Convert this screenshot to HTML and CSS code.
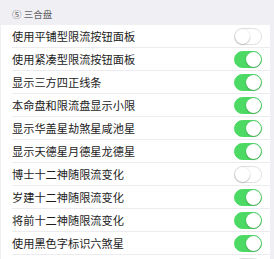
FILE: index.html
```html
<!DOCTYPE html>
<html>
<head>
<meta charset="utf-8">
<link rel="stylesheet" href="styles.css">
</head>
<body>
<div class="page">
  <div class="section-header">⑤ 三合盘</div>
  <div class="list">
    <div class="row"><span class="label">使用平铺型限流按钮面板</span><span class="switch"></span></div>
    <div class="row"><span class="label">使用紧凑型限流按钮面板</span><span class="switch on"></span></div>
    <div class="row"><span class="label">显示三方四正线条</span><span class="switch on"></span></div>
    <div class="row"><span class="label">本命盘和限流盘显示小限</span><span class="switch on"></span></div>
    <div class="row"><span class="label">显示华盖星劫煞星咸池星</span><span class="switch on"></span></div>
    <div class="row"><span class="label">显示天德星月德星龙德星</span><span class="switch on"></span></div>
    <div class="row"><span class="label">博士十二神随限流变化</span><span class="switch"></span></div>
    <div class="row"><span class="label">岁建十二神随限流变化</span><span class="switch on"></span></div>
    <div class="row"><span class="label">将前十二神随限流变化</span><span class="switch on"></span></div>
    <div class="row"><span class="label">使用黑色字标识六煞星</span><span class="switch on"></span></div>
    <div class="row"><span class="label"></span><span class="switch"></span></div>
  </div>
</div>
</body>
</html>
```
FILE: styles.css
```css
html, body {
  margin: 0;
  padding: 0;
  background: #efeff4;
  overflow: hidden;
}
.page {
  width: 274px;
  height: 259px;
  overflow: hidden;
  font-family: "Noto Sans CJK SC", "Liberation Sans", sans-serif;
}
.section-header {
  height: 25px;
  box-sizing: border-box;
  padding-left: 12px;
  font-size: 9.5px;
  line-height: 28px;
  color: #5f5f64;
}
.list {
  margin: 0 4px 0 1px;
  background: #ffffff;
}
.row {
  height: 23px;
  box-sizing: border-box;
  display: flex;
  align-items: center;
  justify-content: space-between;
  padding: 0 8px 0 11px;
  position: relative;
}
.row::after {
  content: "";
  position: absolute;
  left: 11px;
  right: 0;
  bottom: 0;
  height: 1px;
  background: #ececf0;
}
.label {
  font-size: 11.2px;
  color: #1c1c1c;
  line-height: 1;
}
.switch {
  width: 28px;
  height: 17px;
  box-sizing: border-box;
  border-radius: 9px;
  border: 1px solid #e0e0e0;
  background: #ffffff;
  position: relative;
  flex: none;
}
.switch::after {
  content: "";
  position: absolute;
  top: 0;
  left: 0;
  width: 15px;
  height: 15px;
  border-radius: 50%;
  background: #ffffff;
  box-shadow: 0 0.5px 1.5px rgba(0,0,0,0.35);
}
.switch.on {
  background: #4cd964;
  border-color: #4cd964;
}
.switch.on::after {
  left: 11px;
}
```
